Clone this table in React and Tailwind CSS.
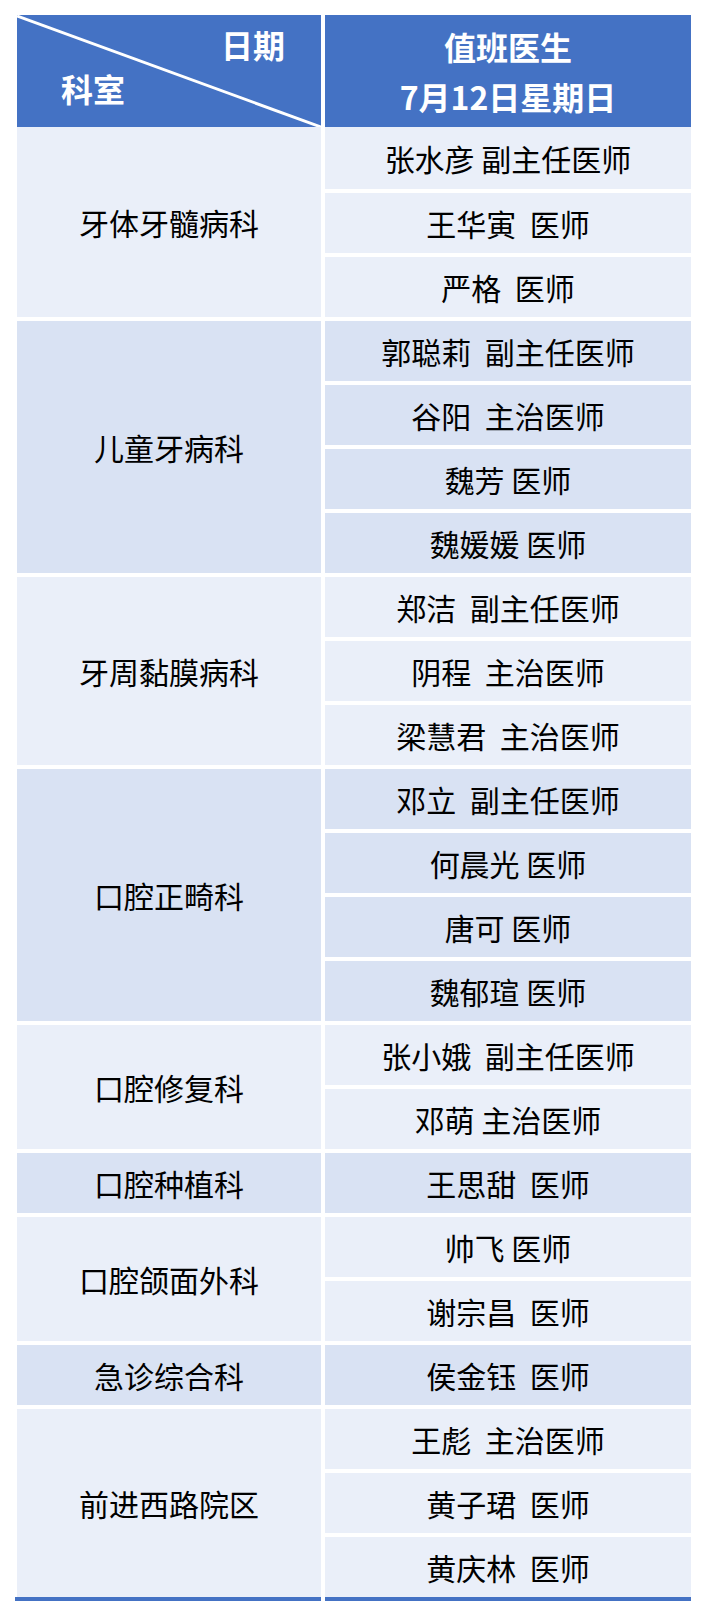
import React from "react";

const groups = [
  { dept: "牙体牙髓病科", docs: ["张水彦 副主任医师", "王华寅  医师", "严格  医师"] },
  { dept: "儿童牙病科", docs: ["郭聪莉  副主任医师", "谷阳  主治医师", "魏芳 医师", "魏媛媛 医师"] },
  { dept: "牙周黏膜病科", docs: ["郑洁  副主任医师", "阴程  主治医师", "梁慧君  主治医师"] },
  { dept: "口腔正畸科", docs: ["邓立  副主任医师", "何晨光 医师", "唐可 医师", "魏郁瑄 医师"] },
  { dept: "口腔修复科", docs: ["张小娥  副主任医师", "邓萌 主治医师"] },
  { dept: "口腔种植科", docs: ["王思甜  医师"] },
  { dept: "口腔颌面外科", docs: ["帅飞 医师", "谢宗昌  医师"] },
  { dept: "急诊综合科", docs: ["侯金钰  医师"] },
  { dept: "前进西路院区", docs: ["王彪  主治医师", "黄子珺  医师", "黄庆林  医师"] },
];

const spanClass = {
  1: "row-span-1",
  2: "row-span-2",
  3: "row-span-3",
  4: "row-span-4",
};

export default function App() {
  const font = { fontFamily: '"Noto Sans CJK SC", "Noto Sans", sans-serif' };
  let rowStart = 1;
  const cells = [];
  groups.forEach((g, gi) => {
    const bg = gi % 2 === 0 ? "bg-[#EAEFF9]" : "bg-[#D9E2F3]";
    cells.push(
      <div
        key={"d" + gi}
        className={`${bg} ${spanClass[g.docs.length]} col-start-1 flex items-center justify-center pb-[1px] text-[30px] leading-none text-black whitespace-pre`}
        style={{ gridRowStart: rowStart }}
      >
        {g.dept}
      </div>
    );
    g.docs.forEach((d, di) => {
      cells.push(
        <div
          key={"n" + gi + "-" + di}
          className={`${bg} col-start-2 flex items-center justify-center pb-[1px] text-[30px] leading-none text-black whitespace-pre`}
          style={{ gridRowStart: rowStart + di }}
        >
          {d}
        </div>
      );
    });
    rowStart += g.docs.length;
  });

  return (
    <div className="w-[706px] h-[1616px] bg-white pt-[15px] pl-[17px]" style={font}>
      <div className="flex gap-[4px]">
        <div className="relative w-[304px] h-[112px] bg-[#4472C4] flex flex-col font-bold text-white text-[32px] leading-none">
          <svg className="absolute inset-0" width="304" height="112" viewBox="0 0 304 112">
            <line x1="0" y1="1" x2="304" y2="112" stroke="#ffffff" strokeWidth="3" />
          </svg>
          <div className="relative self-end pr-[36px] pt-[13px]">日期</div>
          <div className="relative self-start pl-[44px] pt-[12px]">科室</div>
        </div>
        <div className="w-[366px] h-[112px] bg-[#4472C4] flex flex-col items-center justify-center font-bold text-white text-[32px] leading-[50px]">
          <div>值班医生</div>
          <div>7月12日星期日</div>
        </div>
      </div>
      <div className="grid grid-cols-[304px_366px] grid-rows-[62px] auto-rows-[60px] gap-[4px]">
        {cells}
      </div>
      <div className="flex gap-[4px]">
        <div className="w-[306px] -ml-[2px] h-[4px] bg-[#4472C4]" />
        <div className="w-[366px] h-[4px] bg-[#4472C4]" />
      </div>
    </div>
  );
}
